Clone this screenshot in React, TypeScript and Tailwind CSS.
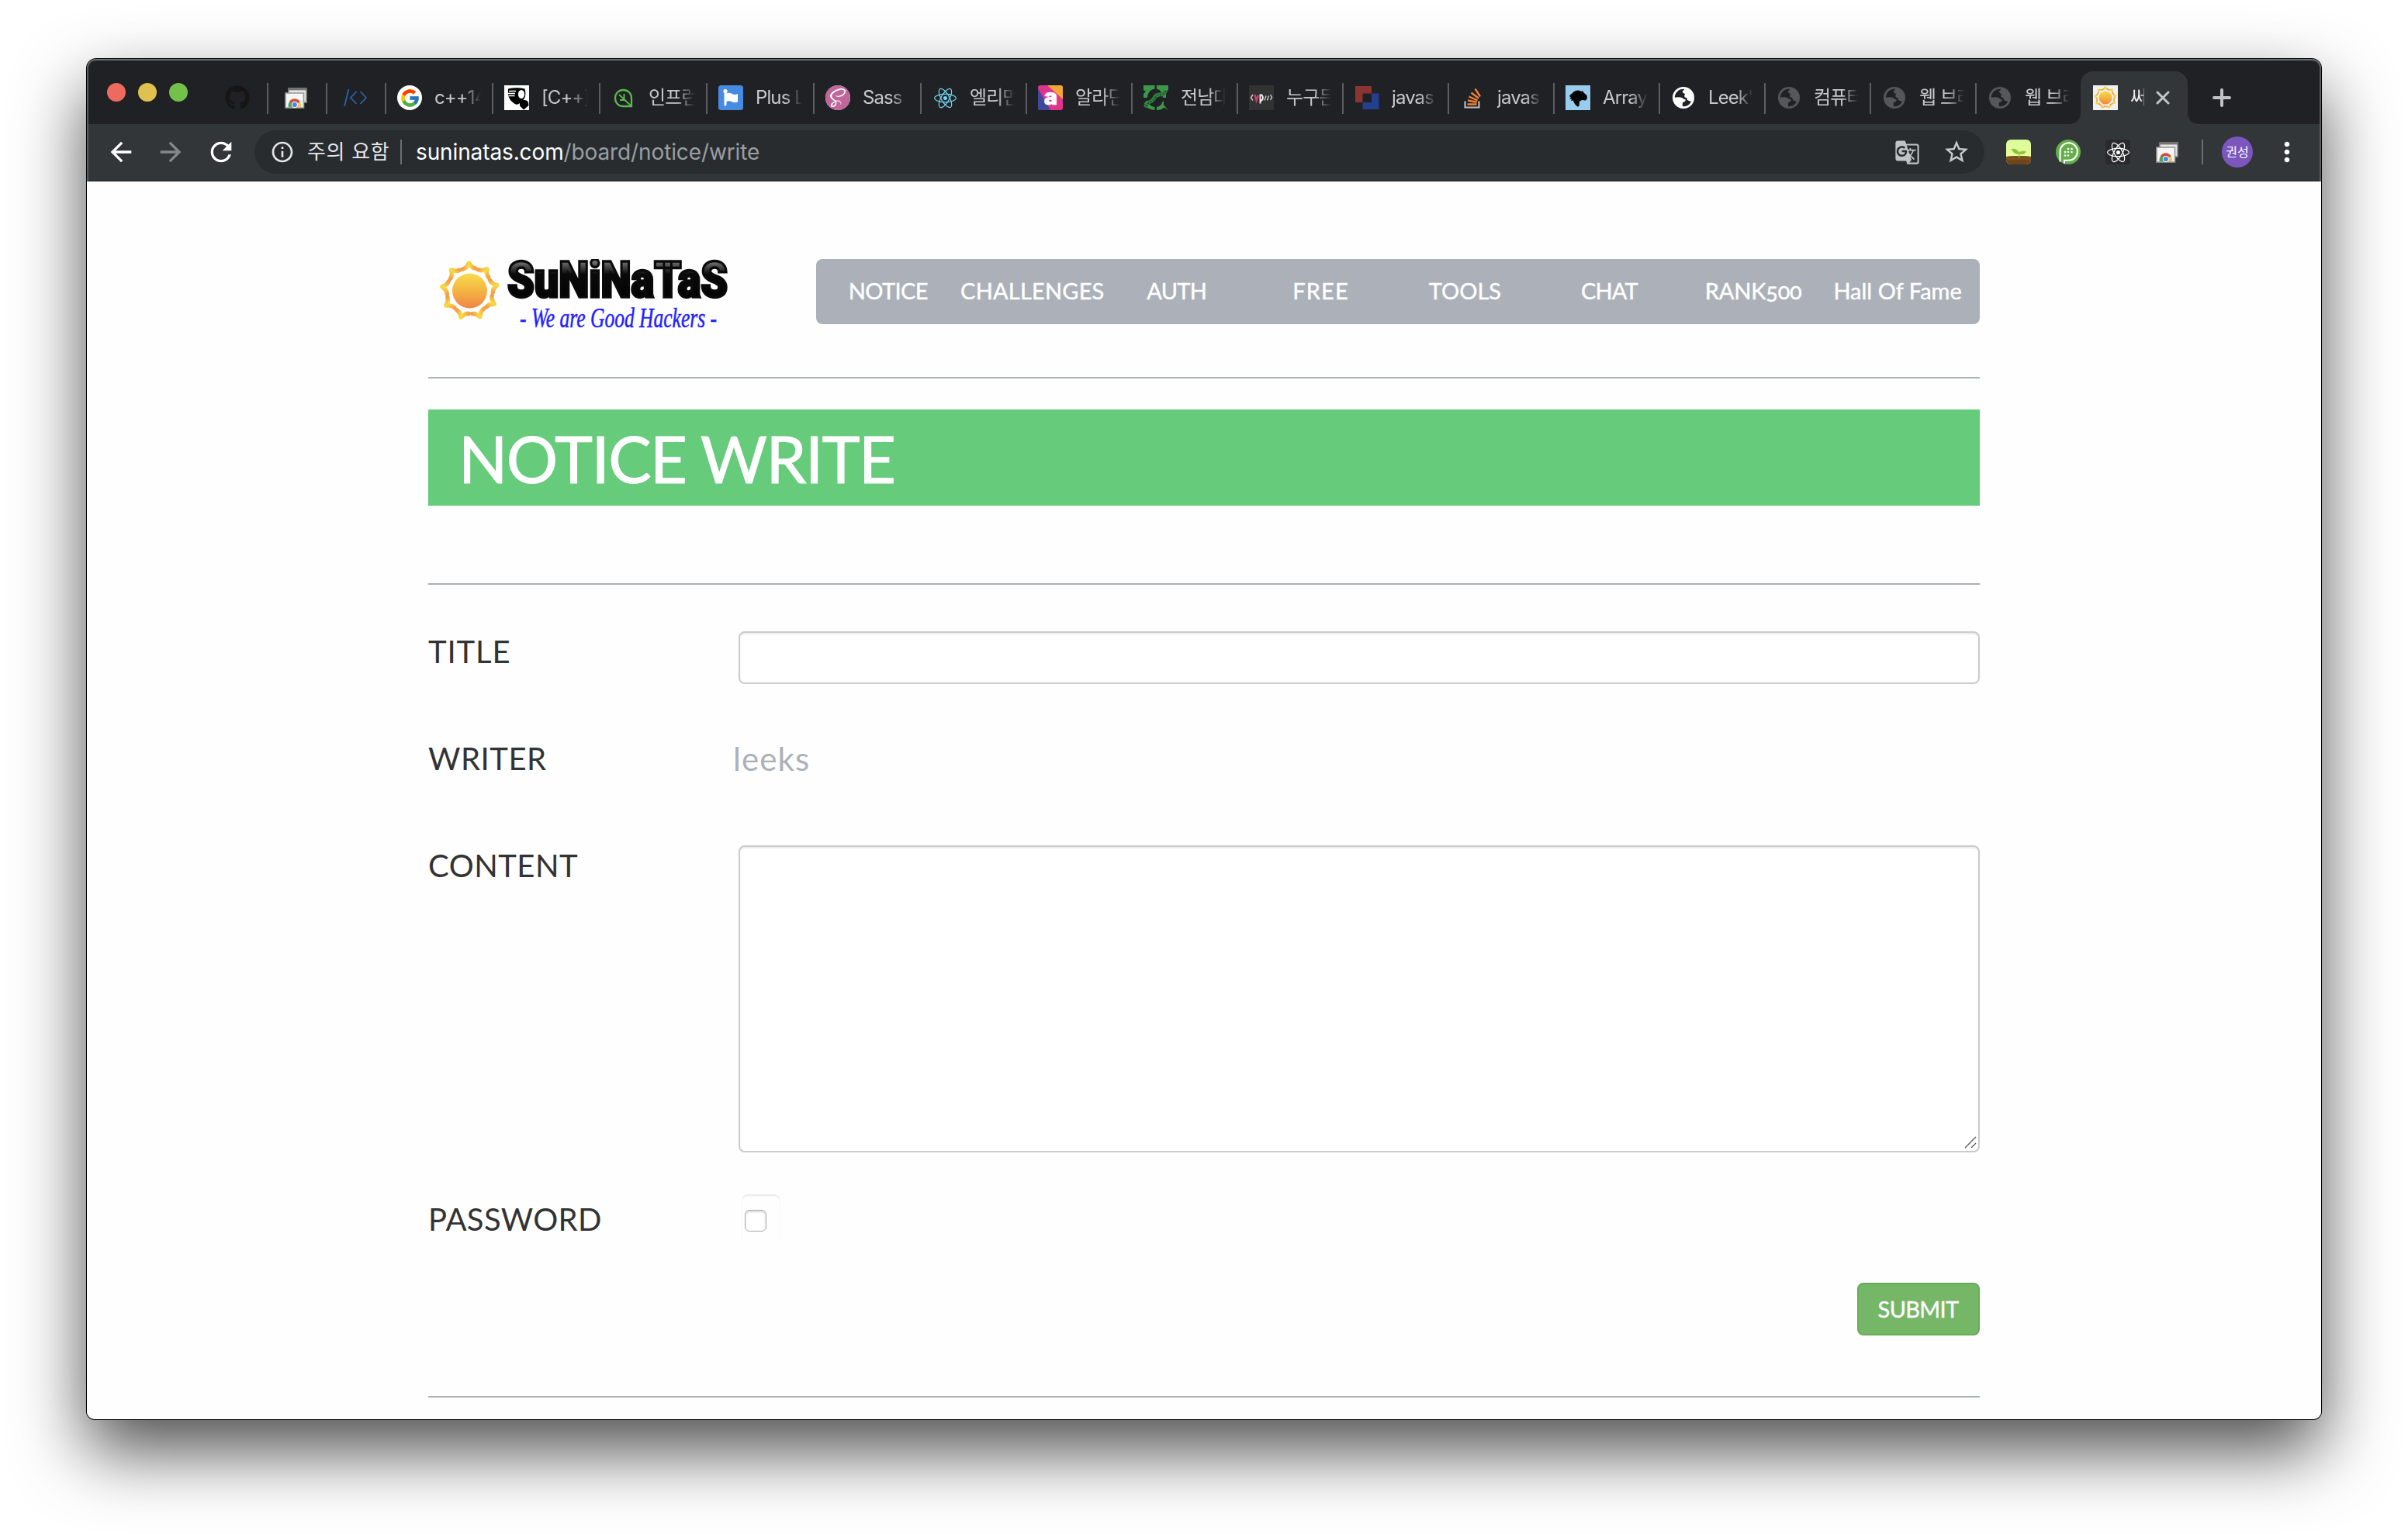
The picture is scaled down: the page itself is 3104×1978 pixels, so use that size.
import React from "react";
import { FaGithub, FaReact, FaStackOverflow } from "react-icons/fa";
import { FcGoogle } from "react-icons/fc";
import { SiSass } from "react-icons/si";
import {
  MdArrowBack,
  MdArrowForward,
  MdGTranslate,
  MdInfoOutline,
  MdMoreVert,
  MdRefresh,
  MdStarBorder,
} from "react-icons/md";

/* ---------- favicons ---------- */

const RemoteDesktopIcon = () => (
  <svg viewBox="0 0 32 32" className="size-8">
    <rect x="6" y="4" width="23" height="18" fill="#e6e6e6" stroke="#8a8a8a" strokeWidth="1.6" />
    <rect x="6" y="3.4" width="23" height="3" fill="#757575" />
    <rect x="2" y="10" width="23.5" height="19" fill="#f5f5f5" stroke="#9a9a9a" strokeWidth="1.6" />
    <path d="M5.800 28.200a8 8 0 0 1 2.400-8l5.600 4.500v3.500z" fill="#4fa25a" />
    <path d="M21.800 28.200a8 8 0 0 0-2.400-8l-5.600 4.500v3.500z" fill="#f3c94b" />
    <path d="M6.800 21.500a8 8 0 0 1 14 0l-7 2.500z" fill="#d1503f" />
    <circle cx="13.800" cy="25" r="4" fill="#fff" />
    <circle cx="13.800" cy="25" r="3.100" fill="#4c84ec" />
  </svg>
);

const CodeIcon = () => (
  <svg viewBox="0 0 32 32" className="size-8" fill="none" stroke="#2668ad" strokeWidth="1.700">
    <path d="M2 27L7.500 5M17.500 8l-7.500 8 7.500 8M22.500 8l7.500 8-7.500 8" />
  </svg>
);

const GoogleIcon = () => (
  <span className="flex size-8 items-center justify-center rounded-full bg-white">
    <FcGoogle size={27} />
  </span>
);

const MaskIcon = () => (
  <svg viewBox="0 0 32 32" className="size-8">
    <rect width="32" height="32" fill="#fff" />
    <path d="M5 4.500Q16 2 26.500 4.500q1.500 5 .500 10-1 3-2.500 4.500 5-.500 6.500 3l.500 4-6.500 5.500-5-5v-3.500q-3 3-6.500 1Q6 19 5 12z" fill="#000" />
    <path d="M6 7.500h9M5 10.500h9M5.500 13.500h8" stroke="#fff" strokeWidth="1.300" />
    <ellipse cx="22" cy="11.500" rx="4" ry="5.500" fill="#fff" />
  </svg>
);

const LeafIcon = () => (
  <svg viewBox="0 0 32 32" className="size-8" fill="none" stroke="#5cb551" strokeWidth="2.300">
    <path d="M26 27H15C9 27 5 22.500 5 16.500S9.500 6 15.500 6 26 10.500 26 16.500z" />
    <path d="M26 27L10 12M16.500 11v7.500M11 19h7" strokeWidth="1.900" />
  </svg>
);

const FlagIcon = () => (
  <svg viewBox="0 0 32 32" className="size-8">
    <rect width="32" height="32" rx="3.500" fill="#478ae2" />
    <circle cx="9" cy="7.500" r="2.600" fill="#fff" />
    <path d="M7.500 8h3v17a1.500 1.500 0 0 1-3 0z" fill="#fff" />
    <path d="M10 10.500q4-1.500 7.500.500t7.500 0v10.500q-4 1.500-7.500-.300T10 21z" fill="#fff" />
  </svg>
);

const SassIcon = () => (
  <span className="flex size-8 items-center justify-center rounded-full bg-white">
    <SiSass size={32} color="#c1669a" />
  </span>
);

const AladinIcon = () => (
  <svg viewBox="0 0 32 32" className="size-8">
    <defs>
      <clipPath id="aladin">
        <rect width="32" height="32" rx="3" />
      </clipPath>
    </defs>
    <g clipPath="url(#aladin)">
      <rect width="32" height="32" fill="#e0348b" />
      <path d="M12 0h20v18z" fill="#f3a73b" />
      <path d="M0 4l16 28H0z" fill="#41489b" />
    </g>
    <text x="16.500" y="25" textAnchor="middle" fill="#fff" stroke="#fff" strokeWidth="0.600" fontSize="29" fontWeight="900" fontFamily="Inter, sans-serif">
      a
    </text>
  </svg>
);

const UniversityIcon = () => (
  <svg viewBox="0 0 32 32" className="size-8">
    <path d="M0 0h14.500v4.500Q5.500 6 5 16H0V11l3-3-3-2zM17 0h15v6l-3 2v8h-4Q24 6 17 4.500z" fill="#3d9949" />
    <path d="M5 19q1 8 9.500 9v4Q3 31 1 23zM26 20v5l5.500 7-5-3.500Q23 32 17 32v-4q6-1 7.500-7z" fill="#3d9949" />
    <path d="M2 28q4-6 7-7t5-5 7-4 8-5" fill="none" stroke="#2f7d3b" strokeWidth="5" />
    <path d="M3 27q4-5 7-6t5-5 7-4 7-5" fill="none" stroke="#1c3a22" strokeWidth="1.200" strokeDasharray="2 2" />
  </svg>
);

const WpsIcon = () => (
  <svg viewBox="0 0 32 32" className="size-8">
    <rect width="32" height="32" fill="#323232" />
    <path d="M5 12l-2.500 4L5 19.500M27.500 12l2 3.500-2 3.500" fill="none" stroke="#c8c8c8" strokeWidth="1.500" />
    <path d="M7.500 12l2 7.500 2.500-6.500" fill="none" stroke="#d83a6c" strokeWidth="2.400" />
    <path d="M14.500 23.500V12.500h2q3 3.500 0 7h-1.500" fill="none" stroke="#f2f2f2" strokeWidth="1.900" />
    <path d="M20 19.500l2-6M23.500 19.500l2-6" fill="none" stroke="#c8c8c8" strokeWidth="1.400" />
  </svg>
);

const SquaresIcon = () => (
  <svg viewBox="0 0 32 32" className="size-8">
    <path d="M1 1h21v9.500H10.500V22H1z" fill="#8b3532" />
    <path d="M22 10.500h9.500V31H10.500v-9H22z" fill="#24408c" />
  </svg>
);

const StackIcon = () => (
  <svg viewBox="0 0 32 32" className="size-8">
    <path d="M6.500 20.500v8H24.500v-8" fill="none" stroke="#bcbbbb" strokeWidth="2.200" />
    <g stroke="#ee8034" strokeWidth="2.400">
      <path d="M9.500 24.500H21.500M10 19.500l11.600 2.300M11.500 14.500l11 5M14.500 9.500l9.500 7.300M19.500 4.500L26 14.500" />
    </g>
  </svg>
);

const HorseIcon = () => (
  <svg viewBox="0 0 32 32" className="size-8">
    <rect width="32" height="32" fill="#98cdee" />
    <path d="M5 14q1-2 4-4 3-4 8-3.500l4 1.500 1-1 1.500 2.500 4 3.500.500 4-2 2.500-5-.500-3 2-.500 6-2 .500q-5-4-5.500-8l-3 .500 1-2.500-3 .500 2-2z" fill="#050505" />
  </svg>
);

/** Placeholder globe shown for pages without a favicon. */
const GlobeIcon = ({ color }: { color: string }) => (
  <svg viewBox="0 0 32 32" className="size-8">
    <circle cx="16" cy="16" r="12.600" fill="none" stroke={color} strokeWidth="2.800" />
    <path d="M17.500 3.500Q17 7 14.500 8q1 2.500 3.500 3-1.500 3 0 4.500 3 0 3 3.500 3.500 2 6 2l1-10-5-6.500z" fill={color} />
    <path d="M3 16q8-1.500 11 0 2.500 2 5 2.500-.500 3-4 3.500-1 4 1 7l-8-3z" fill={color} />
  </svg>
);

const SunShape = () => (
  <>
    <g fill="none" stroke="url(#ray)" strokeWidth="5.500" strokeLinejoin="round" strokeLinecap="round">
      {[0, 40, 80, 120, 160, 200, 240, 280, 320].map((a) => (
        <path key={a} d="M31 12q5-1 8-8 3 6 8 7" transform={`rotate(${a} 40 40)`} />
      ))}
    </g>
    <circle cx="40" cy="40" r="22.500" fill="url(#sun)" />
  </>
);

const SunDefs = () => (
  <defs>
    <linearGradient id="sun" x1="0" y1="0" x2="0" y2="1">
      <stop offset="0" stopColor="#f8dc4c" />
      <stop offset="0.500" stopColor="#f4b441" />
      <stop offset="1" stopColor="#f08648" />
    </linearGradient>
    <linearGradient id="ray" x1="0" y1="0" x2="1" y2="0">
      <stop offset="0" stopColor="#f3a049" />
      <stop offset="0.500" stopColor="#f9dd3f" />
      <stop offset="1" stopColor="#f3a049" />
    </linearGradient>
  </defs>
);

const SunIcon = () => (
  <svg viewBox="-2 -2 84 84" className="size-8 shrink-0 bg-[#f1f1f1]">
    <SunDefs />
    <SunShape />
  </svg>
);

/* ---------- tab strip ---------- */

const tabs: { text: string; icon: React.ReactNode; wide?: boolean }[] = [
  { text: "c++14", icon: <GoogleIcon />, wide: true },
  { text: "[C++]", icon: <MaskIcon />, wide: true },
  { text: "인프런", icon: <LeafIcon />, wide: true },
  { text: "Plus L", icon: <FlagIcon />, wide: true },
  { text: "Sass", icon: <SassIcon />, wide: true },
  { text: "엘리먼", icon: <span className="flex size-8 items-center justify-center bg-[#212223]"><FaReact size={29} color="#74d2f0" /></span> },
  { text: "알라딘", icon: <AladinIcon /> },
  { text: "전남대", icon: <UniversityIcon /> },
  { text: "누구든", icon: <WpsIcon /> },
  { text: "javas", icon: <SquaresIcon /> },
  { text: "javas", icon: <StackIcon /> },
  { text: "Array", icon: <HorseIcon /> },
  { text: "Leek's", icon: <GlobeIcon color="#ffffff" /> },
  { text: "컴퓨터", icon: <GlobeIcon color="#55575b" /> },
  { text: "웹 브라", icon: <GlobeIcon color="#55575b" /> },
  { text: "웹 브라", icon: <GlobeIcon color="#55575b" /> },
];

const Separator = () => <span className="h-10 w-[2px] shrink-0 bg-[#5b5e62]" />;

const PinnedTab = ({ children }: { children: React.ReactNode }) => (
  <div className="flex h-10 w-[76px] shrink-0">
    <Separator />
    <div className="flex flex-1 items-center justify-center pr-[2px] pb-[2px]">{children}</div>
  </div>
);

const Tab = ({ text, icon, wide }: { text: string; icon: React.ReactNode; wide?: boolean }) => (
  <div className={wide ? "flex h-10 w-[138px] shrink-0" : "flex h-10 w-[136px] shrink-0"}>
    <Separator />
    <div className="flex items-center pb-[2px] pl-[14px]">
      <span className="shrink-0">{icon}</span>
      <span
        className={
          (wide ? "w-[60px]" : "w-[58px]") +
          " ml-4 overflow-hidden text-[24px] leading-8 tracking-[-0.900px] whitespace-nowrap text-[#c6c9cd] [mask-image:linear-gradient(to_right,black_62%,transparent)]"
        }
      >
        {text}
      </span>
    </div>
  </div>
);

const ActiveTab = () => (
  <div className="relative -mb-[13px] flex h-[68px] w-[138px] shrink-0 items-center self-end rounded-t-[16px] bg-[#323639] pl-4">
    <svg viewBox="0 0 16 16" className="absolute bottom-0 -left-4 size-4">
      <path d="M16 0v16H0Q16 16 16 0z" fill="#323639" />
    </svg>
    <svg viewBox="0 0 16 16" className="absolute -right-4 bottom-0 size-4">
      <path d="M0 0v16h16Q0 16 0 0z" fill="#323639" />
    </svg>
    <SunIcon />
    <span className="ml-4 w-[18px] overflow-hidden text-[24px] leading-8 whitespace-nowrap text-[#eceef0] [mask-image:linear-gradient(to_right,black_70%,#0008)]">
      써
    </span>
    <svg viewBox="0 0 20 20" className="ml-[14px] size-5 shrink-0">
      <path d="M3 3l14 14M17 3L3 17" stroke="#c3c6c9" strokeWidth="3" strokeLinecap="round" />
    </svg>
  </div>
);

const TabStrip = () => (
  <div className="flex h-[84px] items-center bg-[#202124] pt-[18px] pl-[26px]">
    <div className="flex gap-4 pb-[16px]">
      <span className="size-6 rounded-full bg-[#ed6a5e]" />
      <span className="size-6 rounded-full bg-[#e0c04e]" />
      <span className="size-6 rounded-full bg-[#73c14a]" />
    </div>
    <div className="mr-[22px] ml-12 pb-[2px]">
      <FaGithub size={32} color="#161414" />
    </div>
    <PinnedTab>
      <RemoteDesktopIcon />
    </PinnedTab>
    <PinnedTab>
      <CodeIcon />
    </PinnedTab>
    {tabs.map((t, i) => (
      <Tab key={i} {...t} />
    ))}
    <div className="flex h-10 items-end">
      <ActiveTab />
    </div>
    <svg viewBox="0 0 24 24" className="mb-[2px] ml-8 size-6 shrink-0">
      <path d="M12 2v20M2 12h20" stroke="#c0c3c7" strokeWidth="4" strokeLinecap="round" />
    </svg>
  </div>
);

/* ---------- toolbar ---------- */

const SeedlingExt = () => (
  <svg viewBox="0 0 32 32" className="size-8">
    <defs>
      <linearGradient id="sky" x1="0" y1="0" x2="0" y2="1">
        <stop offset="0" stopColor="#d9fb9a" />
        <stop offset="1" stopColor="#f6fc9c" />
      </linearGradient>
    </defs>
    <rect width="32" height="32" rx="6" fill="url(#sky)" />
    <path d="M0 22q16-2 32 0v4a6 6 0 0 1-6 6H6a6 6 0 0 1-6-6z" fill="#6f4517" />
    <path d="M0 22q16-2 32 0v4.500q-16-1-32 0z" fill="#7c5020" />
    <path d="M16.500 24v-6q-5 2-9.500-5.500 7-1.500 9.500 4.500 2.500-3 9-1.500-3 4.500-8.300 2.700z" fill="#8fc23c" stroke="#8fc23c" strokeWidth="0.800" />
  </svg>
);

const ParkingExt = () => (
  <svg viewBox="0 0 32 32" className="size-8">
    <circle cx="16" cy="16" r="16" fill="#66ae4b" />
    <path d="M5.500 28.500V15.500A11.200 11.200 0 1 1 16.700 26.700H11V31" fill="none" stroke="#fff" strokeWidth="2" />
    <g fill="#fff">
      {[[16, 12], [20.500, 12], [12, 16], [16, 16], [20.500, 16], [12, 20.500], [16, 20.500]].map(([x, y]) => (
        <circle key={`${x}-${y}`} cx={x} cy={y} r="1.300" />
      ))}
    </g>
  </svg>
);

const Toolbar = () => (
  <div className="flex h-[74px] items-center border-b border-[#1f2123] bg-[#323639] pb-[1px] pl-6">
    <MdArrowBack size={40} color="#ffffff" />
    <MdArrowForward size={40} color="#85888a" className="ml-6" />
    <MdRefresh size={40} color="#ffffff" className="ml-[25px]" />
    <div className="ml-[23px] flex h-14 w-[2230px] items-center rounded-full bg-[#282c2f] pr-[18px] pl-5">
      <MdInfoOutline size={32} color="#e4e6e9" />
      <span className="ml-4 w-[120px] text-[26px] leading-8 tracking-[0.700px] whitespace-nowrap text-[#e4e6e9]">주의 요함</span>
      <span className="h-8 w-[2px] bg-[#6d7073]" />
      <span className="ml-[18px] flex-1 text-[28px] leading-8 tracking-[-0.120px] text-[#9a9ea2]">
        <span className="text-white">suninatas.com</span>/board/notice/write
      </span>
      <MdGTranslate size={33} color="#bfc2c6" />
      <MdStarBorder size={36} color="#c7cacd" className="ml-[29px]" />
    </div>
    <div className="ml-7 flex gap-8">
      <SeedlingExt />
      <ParkingExt />
      <span className="flex size-8 items-center justify-center rounded-[3px] bg-[#292a2d]">
        <FaReact size={29} color="#ffffff" />
      </span>
      <RemoteDesktopIcon />
    </div>
    <span className="ml-7 h-8 w-[2px] bg-[#6d7073]" />
    <span className="ml-6 flex size-10 items-center justify-center rounded-full bg-[#7b57bd] text-[16px] leading-none text-white">권성</span>
    <MdMoreVert size={40} color="#ffffff" className="ml-6" />
  </div>
);

/* ---------- page ---------- */

const Logo = () => (
  <svg viewBox="0 0 400 100" className="h-[100px] w-[400px]">
    <SunDefs />
    <defs>
      <linearGradient id="ink" x1="0" y1="0" x2="0" y2="1">
        <stop offset="0.200" stopColor="#6a6a6a" />
        <stop offset="0.400" stopColor="#0a0a0a" />
        <stop offset="1" stopColor="#000" />
      </linearGradient>
    </defs>
    <g transform="translate(13.500 1)">
      <SunShape />
    </g>
    <text x="102" y="48.500" textLength="284" lengthAdjust="spacingAndGlyphs" fontFamily="Roboto, sans-serif" fontWeight="900" fontSize="64" fill="url(#ink)" stroke="#0a0a0a" strokeWidth="3.500">
      SuNiNaTaS
    </text>
    <text x="118" y="88" textLength="254" lengthAdjust="spacingAndGlyphs" fontFamily="'Liberation Serif', serif" fontStyle="italic" fontSize="35" fill="#2222ff" stroke="#2222ff" strokeWidth="0.500">
      - We are Good Hackers -
    </text>
  </svg>
);

const Rule = ({ className }: { className: string }) => <div className={"h-[2px] bg-[#abb0b5] " + className} />;

const NavItem = ({ className = "", children }: { className?: string; children: React.ReactNode }) => (
  <span className={"flex items-center justify-center whitespace-nowrap " + className}>{children}</span>
);

const Label = ({ className = "", children }: { className?: string; children: React.ReactNode }) => (
  <div className={"w-[400px] shrink-0 pt-[6px] text-[40px] leading-10 text-[#333333] " + className}>{children}</div>
);

const Page = () => (
  <div className="h-[1596px] overflow-hidden rounded-b-[10px] bg-[#fefefe] px-[440px] pt-[100px] font-['Lato','Noto_Sans_CJK_KR',sans-serif]">
    <div className="flex h-[84px]">
      <div className="h-[84px] w-[500px] overflow-visible">
        <Logo />
      </div>
      <div className="grid w-[1500px] grid-cols-8 rounded-[8px] bg-[#acb1b9] pr-[13px] pb-[3px] text-[29px] leading-none text-white [-webkit-text-stroke:0.400px_white]">
        <NavItem className="tracking-[-0.600px]">NOTICE</NavItem>
        <NavItem className="tracking-[0.200px]">CHALLENGES</NavItem>
        <NavItem className="tracking-[-0.700px]">AUTH</NavItem>
        <NavItem className="tracking-[1.200px]">FREE</NavItem>
        <NavItem>TOOLS</NavItem>
        <NavItem className="tracking-[-0.900px]">CHAT</NavItem>
        <NavItem className="tracking-[-0.200px] oldstyle-nums">RANK500</NavItem>
        <NavItem>Hall Of Fame</NavItem>
      </div>
    </div>
    <Rule className="mt-[68px]" />
    <h1 className="mt-10 flex h-[124px] items-center bg-[#66cb7b] pt-[3px] pl-[39px] text-[83px] leading-none tracking-[-1.550px] text-white [-webkit-text-stroke:1px_white]">
      NOTICE WRITE
    </h1>
    <Rule className="mt-[100px]" />
    <div className="mt-[60px] flex h-[138px]">
      <Label className="tracking-[0.880px]">TITLE</Label>
      <div className="h-[68px] flex-1 rounded-[8px] border-2 border-[#cccccc] bg-white shadow-[inset_0_2px_2px_rgba(0,0,0,0.075)]" />
    </div>
    <div className="flex h-[138px]">
      <Label className="tracking-[0.520px]">WRITER</Label>
      <div className="-ml-[7px] pt-[6px] text-[42px] leading-10 tracking-[1.100px] text-[#acb1b9]">leeks</div>
    </div>
    <div className="flex h-[396px]">
      <Label className="tracking-[0.500px]">CONTENT</Label>
      <div className="flex flex-1 items-end justify-end rounded-[8px] border-2 border-[#cccccc] bg-white p-[2px] shadow-[inset_0_2px_2px_rgba(0,0,0,0.075)]">
        <svg viewBox="0 0 16 16" className="mb-px size-4">
          <path d="M1 15L15 1M9 15l6-6" stroke="#5c5c5c" strokeWidth="1.400" />
        </svg>
      </div>
    </div>
    <div className="mt-[60px] flex h-[108px]">
      <Label className="tracking-[0.360px]">PASSWORD</Label>
      <div className="-mt-[6px] ml-1 h-[68px] w-[50px] rounded-[8px] pt-[20px] pl-1 shadow-[inset_0_2px_2px_rgba(0,0,0,0.085)] [mask-image:linear-gradient(to_bottom,black_90%,transparent)]">
        <div className="size-7 rounded-[6px] border border-[#a9a9a9] bg-white shadow-[inset_0_2px_3px_rgba(0,0,0,0.150)]" />
      </div>
    </div>
    <div className="flex justify-end">
      <div className="flex h-[68px] w-[158px] items-center justify-center rounded-[8px] border-2 border-[#66ad57] bg-[#75b667] pr-px pb-[2px] text-[29px] leading-none tracking-[-0.700px] text-white [-webkit-text-stroke:0.400px_white]">
        SUBMIT
      </div>
    </div>
    <Rule className="mt-[78px]" />
  </div>
);

export default function App() {
  return (
    <div className="h-[1978px] w-[3104px] overflow-hidden bg-white px-[112px] pt-[76px] font-['Inter','Noto_Sans_CJK_KR',sans-serif]">
      <div className="h-[1754px] w-[2880px] rounded-t-[12px] rounded-b-[10px] shadow-[0_0_0_1px_#000000,0_40px_90px_rgba(0,0,0,0.700)]">
        <div className="relative overflow-hidden rounded-t-[12px]">
          <TabStrip />
          <Toolbar />
          <div className="pointer-events-none absolute inset-0 rounded-t-[12px] shadow-[inset_0_2px_0_#6c6d6f,inset_2px_0_0_#5a5e61,inset_-2px_0_0_#5a5e61]" />
        </div>
        <Page />
      </div>
    </div>
  );
}
